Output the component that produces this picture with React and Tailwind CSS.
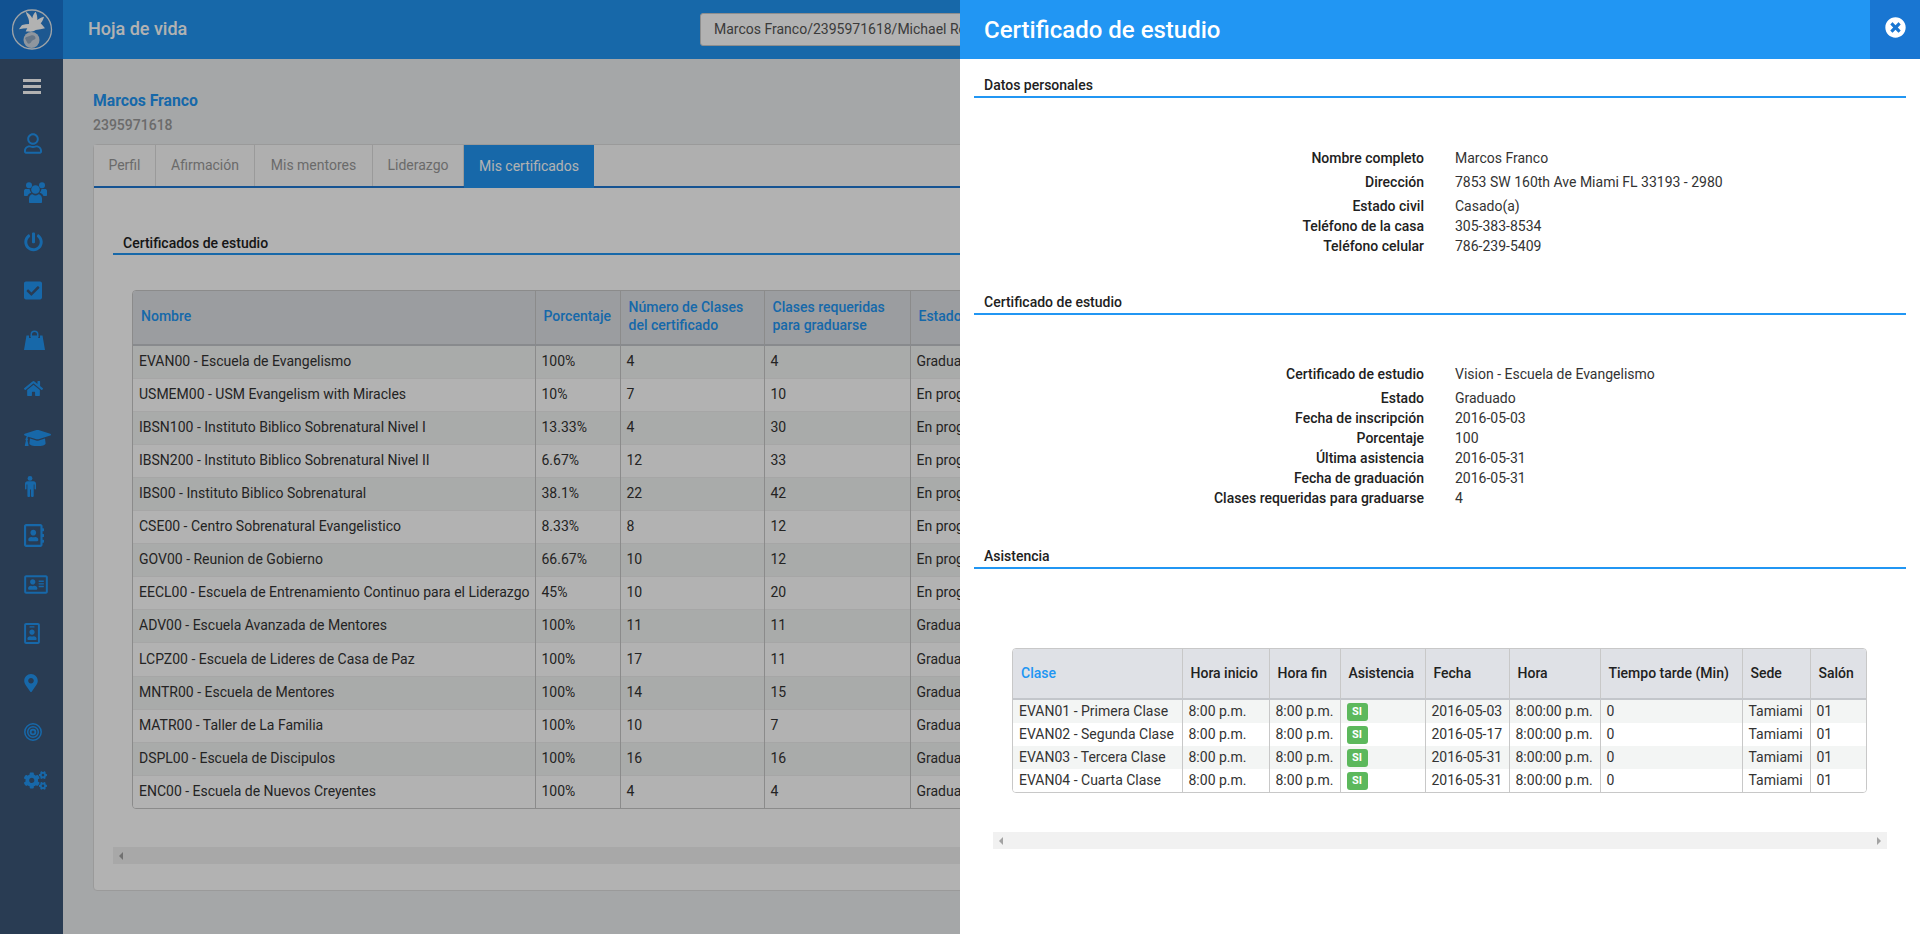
import React from "react";
import { FaRegUser, FaPowerOff, FaCheckSquare, FaHome, FaGraduationCap, FaRegAddressBook, FaRegAddressCard, FaRegIdBadge, FaMapMarkerAlt, FaCogs, FaTimesCircle } from "react-icons/fa";

function UsersIcon() {
  return (
    <svg width="23" height="21" viewBox="0 0 23 21" fill="currentColor">
      <circle cx="5" cy="3.200" r="3" />
      <circle cx="18" cy="3.200" r="3" />
      <circle cx="11.500" cy="7.500" r="4.300" />
      <path d="M0 9c0-1.500 1-2 2-2h3.500c.2 1.500.8 2.800 1.800 3.800-2 .6-3.300 1.700-3.800 3.200H1c-.6 0-1-.4-1-1zM23 9c0-1.500-1-2-2-2h-3.500c-.2 1.500-.8 2.800-1.800 3.800 2 .6 3.300 1.700 3.800 3.200H22c.6 0 1-.4 1-1z" />
      <path d="M6 21c-.6 0-1-.4-1-1v-3.500c0-2.500 2-4.300 3.500-4.300 1 .8 2 1.300 3 1.300s2-.5 3-1.300c1.500 0 3.500 1.800 3.500 4.300V20c0 .6-.4 1-1 1z" />
    </svg>
  );
}

function BagIcon() {
  return (
    <svg width="21" height="21" viewBox="0 0 21 21" fill="currentColor">
      <path d="M6.500 8V5.500a4 4 0 0 1 8 0V8h-1.500V5.500a2.500 2.500 0 0 0-5 0V8z" />
      <path d="M2.500 6.500H5V9h1.800V6.500h7.400V9H16V6.500h2.500L21 21H0z" />
    </svg>
  );
}

function MaleIcon() {
  return (
    <svg width="12" height="21" viewBox="0 0 12 21" fill="currentColor">
      <circle cx="6" cy="2.400" r="2.400" />
      <path d="M2.500 5.300h7c1.400 0 2.500 1.100 2.500 2.500v5c0 .8-1.500.8-1.500 0V8.500h-.8V20c0 1.300-2.700 1.300-2.700 0v-6.500h-.9V20c0 1.300-2.700 1.300-2.700 0V8.500h-.9v4.300c0 .8-1.500.8-1.500 0v-5c0-1.400 1.100-2.500 2.500-2.500z" />
    </svg>
  );
}

function TargetIcon() {
  return (
    <svg width="18" height="18" viewBox="0 0 18 18" fill="none" stroke="currentColor">
      <circle cx="9" cy="9" r="8.200" strokeWidth="1.500" />
      <circle cx="9" cy="9" r="5.300" strokeWidth="1.500" />
      <circle cx="9" cy="9" r="2.400" strokeWidth="1.800" />
    </svg>
  );
}

function BarsIcon() {
  return (
    <svg width="18" height="15" viewBox="0 0 18 15" fill="currentColor">
      <rect y="0" width="18" height="3" />
      <rect y="6" width="18" height="3" />
      <rect y="12" width="18" height="3" />
    </svg>
  );
}

const navIcons = [
  [<FaRegUser />, "[&>svg]:w-[18px] [&>svg]:h-[21px]"],
  [<UsersIcon />, ""],
  [<FaPowerOff />, "[&>svg]:w-[19px] [&>svg]:h-[20px]"],
  [<FaCheckSquare />, "[&>svg]:w-[18px] [&>svg]:h-[21px]"],
  [<BagIcon />, ""],
  [<FaHome />, "[&>svg]:w-[19px] [&>svg]:h-[17px]"],
  [<FaGraduationCap />, "[&>svg]:w-[27px] [&>svg]:h-[22px]"],
  [<MaleIcon />, ""],
  [<FaRegAddressBook />, "[&>svg]:w-[20px] [&>svg]:h-[23px]"],
  [<FaRegAddressCard />, "[&>svg]:w-[24px] [&>svg]:h-[21px]"],
  [<FaRegIdBadge />, "[&>svg]:w-[16px] [&>svg]:h-[21px]"],
  [<FaMapMarkerAlt />, "[&>svg]:w-[14px] [&>svg]:h-[18px]"],
  [<TargetIcon />, ""],
  [<FaCogs />, "[&>svg]:w-[23px] [&>svg]:h-[19px]"],
];

const certs = [
  ["EVAN00 - Escuela de Evangelismo", "100%", "4", "4", "Graduado"],
  ["USMEM00 - USM Evangelism with Miracles", "10%", "7", "10", "En progreso"],
  ["IBSN100 - Instituto Biblico Sobrenatural Nivel I", "13.33%", "4", "30", "En progreso"],
  ["IBSN200 - Instituto Biblico Sobrenatural Nivel II", "6.67%", "12", "33", "En progreso"],
  ["IBS00 - Instituto Biblico Sobrenatural", "38.1%", "22", "42", "En progreso"],
  ["CSE00 - Centro Sobrenatural Evangelistico", "8.33%", "8", "12", "En progreso"],
  ["GOV00 - Reunion de Gobierno", "66.67%", "10", "12", "En progreso"],
  ["EECL00 - Escuela de Entrenamiento Continuo para el Liderazgo", "45%", "10", "20", "En progreso"],
  ["ADV00 - Escuela Avanzada de Mentores", "100%", "11", "11", "Graduado"],
  ["LCPZ00 - Escuela de Lideres de Casa de Paz", "100%", "17", "11", "Graduado"],
  ["MNTR00 - Escuela de Mentores", "100%", "14", "15", "Graduado"],
  ["MATR00 - Taller de La Familia", "100%", "10", "7", "Graduado"],
  ["DSPL00 - Escuela de Discipulos", "100%", "16", "16", "Graduado"],
  ["ENC00 - Escuela de Nuevos Creyentes", "100%", "4", "4", "Graduado"],
];

const attendance = [
  ["EVAN01 - Primera Clase", "2016-05-03"],
  ["EVAN02 - Segunda Clase", "2016-05-17"],
  ["EVAN03 - Tercera Clase", "2016-05-31"],
  ["EVAN04 - Cuarta Clase", "2016-05-31"],
];

function Logo() {
  return (
    <svg width="42" height="42" viewBox="0 0 42 42">
      <circle cx="21" cy="20.500" r="19.500" fill="#2a7fd0" stroke="#e6ebf0" strokeWidth="1.300" />
      <path d="M14.700 2.700C17.500 4 20 6.500 21.300 9.300 21.500 7 23 4 24.700 2.700c1.200 2.500 1.800 5.500 1.600 8.300 2-1.500 4.300-2.800 6.700-3.300-.5 2.500-1.700 4.800-3.300 6.600 1.500 1.500 3 3.200 4.300 5-3 .8-6.300 1.200-9.300 1.700-1.700 1-3.200 1.700-5 1.700-1.700 0-3.500-.3-5-.1.500-1.200 1-2.400 1.600-3.400-2.800 0-5.600.4-8.300 1 1-1.700 2-3.300 3.300-4.300 2.200-.6 4.500-1 6.700-1 .2-2 0-3.700-.7-5.700-1.200-2.200-2-4.300-2.600-6.500z" fill="#fff" />
      <circle cx="20.500" cy="31" r="8" fill="#cdd7e2" />
      <path d="M14 29c2-2 4-1.500 6-2.500s4.500.5 4.500 2.500-3 1.500-4 3.500-3 3-4 1.500-1.500-3-2.500-5z" fill="#93a9c2" />
    </svg>
  );
}

function ScrollBar({ className }) {
  return (
    <div className={`h-[17px] bg-[#f1f1f1] flex items-center justify-between px-[6px] ${className}`}>
      <svg width="4" height="8" viewBox="0 0 4 8"><path d="M4 0v8L0 4z" fill="#a3a3a3" /></svg>
      <svg width="4" height="8" viewBox="0 0 4 8"><path d="M0 0v8l4-4z" fill="#a3a3a3" /></svg>
    </div>
  );
}

function SectionHead({ children, className = "" }) {
  return (
    <div className={`ml-[14px] w-[932px] h-[24px] border-b-2 border-[#2196f3] pl-[10px] text-[14px] leading-[23px] font-medium text-[#212121] ${className}`}>
      {children}
    </div>
  );
}

function InfoRow({ label, value, className = "" }) {
  return (
    <div className={`flex h-[20px] items-center text-[14px] text-[#333] ${className}`}>
      <div className="w-[464px] text-right font-medium text-[#212121]">{label}</div>
      <div className="ml-[31px]">{value}</div>
    </div>
  );
}

export default function App() {
  return (
    <div className="relative w-[1920px] h-[934px] overflow-hidden flex bg-[#edeff1] text-[14px] text-[#333]" style={{ fontFamily: "Roboto, sans-serif" }}>
      <aside className="w-[63px] shrink-0 bg-[#3b5678] flex flex-col">
        <div className="h-[59px] bg-[#1976d2] flex items-center justify-center"><Logo /></div>
        <div className="h-[54px] flex items-center justify-center text-white"><BarsIcon /></div>
        <div className="flex flex-col pt-[6px]">
          {navIcons.map(([icon, size], i) => (
            <div key={i} className={`h-[49px] flex items-center pl-[24px] text-[#2196f3] ${size}`}>{icon}</div>
          ))}
        </div>
      </aside>

      <div className="flex-1 min-w-0 flex flex-col">
        <header className="h-[59px] shrink-0 bg-[#2196f3] flex items-center">
          <div className="w-[637px] pl-[25px] pb-[2px] text-white text-[18px] font-medium">Hoja de vida</div>
          <div className="w-[600px] h-[33px] bg-white border border-[#ccc] rounded-[3px] pl-[13px] flex items-center text-[14px] text-[#555] whitespace-nowrap overflow-hidden">
            Marcos Franco/2395971618/Michael Rodriguez
          </div>
        </header>

        <main className="flex-1 pl-[30px] pt-[32px]">
          <div className="text-[15.7px] leading-[20px] font-bold text-[#2196f3]">Marcos Franco</div>
          <div className="mt-[5px] text-[14px] leading-[18px] font-medium text-[#9a9a9a]">2395971618</div>
          <div className="mt-[10px] w-[1500px] h-[747px] bg-white border border-[#ddd] rounded-[4px]">
            <div className="flex h-[43px] border-b-2 border-[#1f78d1] bg-[#fbfbfb] text-[#999]">
              <div className="w-[62px] flex items-center justify-center border-r border-[#ddd]">Perfil</div>
              <div className="w-[99px] flex items-center justify-center border-r border-[#ddd]">Afirmación</div>
              <div className="w-[118px] flex items-center justify-center border-r border-[#ddd]">Mis mentores</div>
              <div className="w-[91px] flex items-center justify-center border-r border-[#ddd]">Liderazgo</div>
              <div className="w-[130px] flex items-center justify-center bg-[#2196f3] text-white -mb-[2px]">Mis certificados</div>
            </div>
            <div className="pl-[19px] pt-[45px]">
              <div className="h-[22px] border-b-2 border-[#2196f3] pl-[10px] text-[14px] leading-[21px] font-medium text-[#212121]">Certificados de estudio</div>
              <div className="ml-[19px] mt-[35px] w-[1300px] border border-[#c8c8c8] rounded-[4px] overflow-hidden">
                <table className="w-full table-fixed border-collapse">
                  <colgroup>
                    <col className="w-[402px]" />
                    <col className="w-[85px]" />
                    <col className="w-[144px]" />
                    <col className="w-[146px]" />
                    <col />
                  </colgroup>
                  <thead>
                    <tr className="h-[54px] bg-[#dfe1e6] border-b-2 border-[#c3c6cb]">
                      {["Nombre", "Porcentaje", "Número de Clases del certificado", "Clases requeridas para graduarse", "Estado"].map((h) => (
                        <th key={h} className="px-[8px] pb-[4px] text-left text-[14px] leading-[18px] font-medium text-[#2196f3] border-r border-[#c8c8c8]">{h}</th>
                      ))}
                    </tr>
                  </thead>
                  <tbody>
                    {certs.map((r, i) => (
                      <tr key={r[0]} className={`border-t border-[#eee] ${i === 9 ? "h-[34px]" : "h-[33px]"} ${i % 2 === 0 ? "bg-[#f3f5f4]" : "bg-white"}`}>
                        {r.map((c, j) => (
                          <td key={j} className="px-[6px] text-[14px] text-[#333] border-r border-[#c8c8c8] whitespace-nowrap">{c}</td>
                        ))}
                      </tr>
                    ))}
                  </tbody>
                </table>
              </div>
              <ScrollBar className="mt-[38px] w-[1400px]" />
            </div>
          </div>
        </main>
      </div>

      <div className="absolute inset-0 bg-black/30" />

      <section className="absolute top-0 right-0 bottom-0 w-[960px] bg-white">
        <div className="h-[59px] bg-[#2196f3] flex items-center justify-between">
          <h1 className="pl-[24px] text-[24px] font-medium text-white">Certificado de estudio</h1>
          <div className="w-[50px] h-[59px] pb-[5px] bg-[#1976d2] flex items-center justify-center text-white text-[21px]"><FaTimesCircle /></div>
        </div>

        <SectionHead className="mt-[15px]">Datos personales</SectionHead>
        <div className="mt-[50px]">
          <InfoRow className="mb-[4px]" label="Nombre completo" value="Marcos Franco" />
          <InfoRow className="mb-[4px]" label="Dirección" value="7853 SW 160th Ave Miami FL 33193 - 2980" />
          <InfoRow label="Estado civil" value="Casado(a)" />
          <InfoRow label="Teléfono de la casa" value="305-383-8534" />
          <InfoRow label="Teléfono celular" value="786-239-5409" />
        </div>

        <SectionHead className="mt-[35px]">Certificado de estudio</SectionHead>
        <div className="mt-[49px]">
          <InfoRow className="mb-[4px]" label="Certificado de estudio" value="Vision - Escuela de Evangelismo" />
          <InfoRow label="Estado" value="Graduado" />
          <InfoRow label="Fecha de inscripción" value="2016-05-03" />
          <InfoRow label="Porcentaje" value="100" />
          <InfoRow label="Última asistencia" value="2016-05-31" />
          <InfoRow label="Fecha de graduación" value="2016-05-31" />
          <InfoRow label="Clases requeridas para graduarse" value="4" />
        </div>

        <SectionHead className="mt-[37px]">Asistencia</SectionHead>

        <div className="ml-[52px] mt-[79px] w-[855px] border border-[#c8c8c8] rounded-[4px] overflow-hidden">
          <table className="w-full table-fixed border-collapse">
            <colgroup>
              <col className="w-[169px]" />
              <col className="w-[87px]" />
              <col className="w-[71px]" />
              <col className="w-[85px]" />
              <col className="w-[84px]" />
              <col className="w-[91px]" />
              <col className="w-[142px]" />
              <col className="w-[68px]" />
              <col />
            </colgroup>
            <thead>
              <tr className="h-[50px] bg-[#dfe1e6] border-b-2 border-[#c3c6cb]">
                {["Clase", "Hora inicio", "Hora fin", "Asistencia", "Fecha", "Hora", "Tiempo tarde (Min)", "Sede", "Salón"].map((h, i) => (
                  <th key={h} className={`px-[8px] text-left text-[14px] font-medium whitespace-nowrap border-r border-[#c8c8c8] last:border-r-0 ${i === 0 ? "text-[#2196f3]" : "text-[#212121]"}`}>{h}</th>
                ))}
              </tr>
            </thead>
            <tbody>
              {attendance.map(([name, date], i) => (
                <tr key={name} className={`${i === 0 ? "h-[24px]" : "h-[23px]"} ${i % 2 === 0 ? "bg-[#f3f5f4]" : "bg-white"}`}>
                  <td className="px-[6px] whitespace-nowrap border-r border-[#c8c8c8]">{name}</td>
                  <td className="px-[6px] whitespace-nowrap border-r border-[#c8c8c8]">8:00 p.m.</td>
                  <td className="px-[6px] whitespace-nowrap border-r border-[#c8c8c8]">8:00 p.m.</td>
                  <td className="px-[6px] border-r border-[#c8c8c8]">
                    <span className="flex w-[21px] h-[18px] mt-[1px] items-center justify-center rounded-[3px] bg-[#5cb85c] text-white text-[11px] font-bold">SI</span>
                  </td>
                  <td className="px-[6px] whitespace-nowrap border-r border-[#c8c8c8]">{date}</td>
                  <td className="px-[6px] whitespace-nowrap border-r border-[#c8c8c8]">8:00:00 p.m.</td>
                  <td className="px-[6px] border-r border-[#c8c8c8]">0</td>
                  <td className="px-[6px] border-r border-[#c8c8c8]">Tamiami</td>
                  <td className="px-[6px]">01</td>
                </tr>
              ))}
            </tbody>
          </table>
        </div>
        <ScrollBar className="ml-[33px] mt-[39px] w-[894px]" />
      </section>
    </div>
  );
}
